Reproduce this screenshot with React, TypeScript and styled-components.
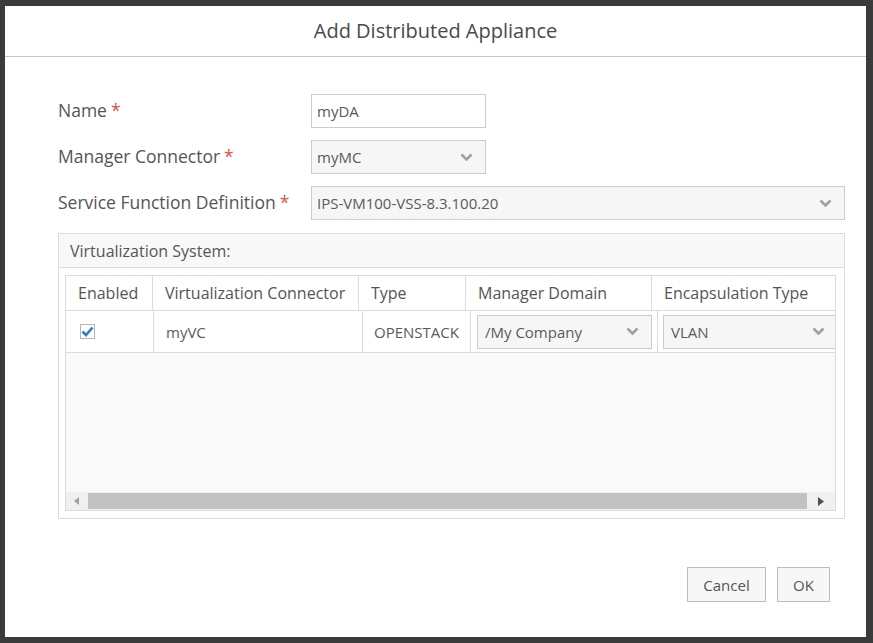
import React from "react";
import styled, { createGlobalStyle } from "styled-components";

const GlobalStyle = createGlobalStyle`
  html, body { margin: 0; padding: 0; }
  body {
    background: #3b3b3b;
    font-family: "Open Sans", "Liberation Sans", sans-serif;
    color: #444;
  }
  * { box-sizing: border-box; }
`;

const Backdrop = styled.div`
  width: 873px;
  height: 643px;
  padding: 6px 7px 6px 5px;
  background: #3b3b3b;
`;

const Dialog = styled.div`
  width: 100%;
  height: 100%;
  background: #fff;
  display: flex;
  flex-direction: column;
`;

const Header = styled.div`
  height: 51px;
  flex: none;
  border-bottom: 1px solid #c4c4c4;
  display: flex;
  align-items: center;
  justify-content: center;
  padding-bottom: 1px;
  font-size: 20px;
  color: #4a4a4a;
`;

const Body = styled.div`
  flex: 1;
  padding: 37px 21px 0 53px;
  display: flex;
  flex-direction: column;
`;

const FormRow = styled.div`
  display: grid;
  grid-template-columns: 253px 1fr;
  align-items: center;
  margin-bottom: 12px;
`;

const Label = styled.label`
  font-size: 17.5px;
  color: #555;
  margin-top: -3px;
`;

const Req = styled.span`
  color: #d9534f;
  margin-left: 4px;
`;

const TextInput = styled.div<{ $w?: number }>`
  width: ${(p) => (p.$w ? `${p.$w}px` : "100%")};
  height: 34px;
  border: 1px solid #ccc;
  background: #fff;
  display: flex;
  align-items: center;
  padding: 0 5px;
  font-size: 15px;
  color: #5a5a5a;
`;

const SelectBox = styled.div<{ $w?: number; $pad: number }>`
  width: ${(p) => (p.$w ? `${p.$w}px` : "100%")};
  height: 34px;
  border: 1px solid #ccc;
  background: #f6f6f6;
  display: flex;
  align-items: center;
  justify-content: space-between;
  padding: 0 12px 0 ${(p) => p.$pad}px;
  font-size: 15px;
  color: #5a5a5a;
  flex: none;
`;

const Chevron = () => (
  <svg width="13" height="9" viewBox="0 0 13 9">
    <polyline points="1.5,1.5 6.5,6.5 11.5,1.5" fill="none" stroke="#a0a0a0" strokeWidth="2.6" />
  </svg>
);

const Select = ({ value, w, pad = 5 }: { value: string; w?: number; pad?: number }) => (
  <SelectBox $w={w} $pad={pad}>
    <span>{value}</span>
    <Chevron />
  </SelectBox>
);

const Panel = styled.div`
  margin-top: 1px;
  border: 1px solid #dcdcdc;
  height: 286px;
  display: flex;
  flex-direction: column;
`;

const PanelHeader = styled.div`
  height: 34px;
  flex: none;
  background: #f8f8f8;
  border-bottom: 1px solid #dcdcdc;
  display: flex;
  align-items: center;
  padding-left: 11px;
  font-size: 16px;
  color: #555;
`;

const PanelBody = styled.div`
  flex: 1;
  padding: 7px 8px 7px 6px;
  display: flex;
`;

const TableBox = styled.div`
  flex: 1;
  border: 1px solid #dcdcdc;
  background: #f9f9f9;
  display: flex;
  flex-direction: column;
  overflow: hidden;
`;

const HeadRow = styled.div`
  display: grid;
  grid-template-columns: 87px 206px 107px 186px 200px;
  height: 35px;
  flex: none;
  background: #fff;
  border-bottom: 1px solid #dcdcdc;
`;

const HeadCell = styled.div<{ $last?: boolean }>`
  display: flex;
  align-items: center;
  padding-left: 12px;
  font-size: 16px;
  color: #555;
  white-space: nowrap;
  border-right: ${(p) => (p.$last ? "none" : "1px solid #dcdcdc")};
`;

const DataRow = styled.div`
  display: grid;
  grid-template-columns: 88px 209px 108px 187px 200px;
  height: 42px;
  flex: none;
  background: #fff;
  border-bottom: 1px solid #dcdcdc;
`;

const Cell = styled.div<{ $pad?: number; $last?: boolean }>`
  display: flex;
  align-items: center;
  padding-left: ${(p) => p.$pad ?? 12}px;
  font-size: 15px;
  color: #5a5a5a;
  white-space: nowrap;
  border-right: ${(p) => (p.$last ? "none" : "1px solid #dcdcdc")};
`;

const Check = styled.div`
  width: 15px;
  height: 15px;
  border: 1px solid #b5b5b5;
  background: #fff;
  display: flex;
  align-items: center;
  justify-content: center;
`;

const Filler = styled.div`
  flex: 1;
`;

const Scrollbar = styled.div`
  height: 18px;
  flex: none;
  display: flex;
  background: #f0f0f0;
`;

const ScrollArrow = styled.div<{ $w: number }>`
  width: ${(p) => p.$w}px;
  flex: none;
  display: flex;
  align-items: center;
  justify-content: center;
`;

const Thumb = styled.div`
  flex: 1;
  background: #c1c1c1;
  margin: 1px 0;
`;

const Footer = styled.div`
  display: flex;
  justify-content: flex-end;
  gap: 11px;
  padding: 48px 15px 0 0;
`;

const Button = styled.button<{ $w: number }>`
  width: ${(p) => p.$w}px;
  height: 35px;
  border: 1px solid #bdbdbd;
  background: #f7f7f7;
  font-family: "Open Sans", "Liberation Sans", sans-serif;
  font-size: 15px;
  color: #555;
  padding: 0;
`;

export default function App() {
  return (
    <>
      <GlobalStyle />
      <Backdrop>
        <Dialog>
          <Header>Add Distributed Appliance</Header>
          <Body>
            <FormRow>
              <Label>
                Name<Req>*</Req>
              </Label>
              <TextInput $w={175}>myDA</TextInput>
            </FormRow>
            <FormRow>
              <Label>
                Manager Connector<Req>*</Req>
              </Label>
              <Select value="myMC" w={175} />
            </FormRow>
            <FormRow>
              <Label>
                Service Function Definition<Req>*</Req>
              </Label>
              <Select value="IPS-VM100-VSS-8.3.100.20" />
            </FormRow>
            <Panel>
              <PanelHeader>Virtualization System:</PanelHeader>
              <PanelBody>
                <TableBox>
                  <HeadRow>
                    <HeadCell>Enabled</HeadCell>
                    <HeadCell>Virtualization Connector</HeadCell>
                    <HeadCell>Type</HeadCell>
                    <HeadCell>Manager Domain</HeadCell>
                    <HeadCell $last>Encapsulation Type</HeadCell>
                  </HeadRow>
                  <DataRow>
                    <Cell $pad={14}>
                      <Check>
                        <svg width="13" height="11" viewBox="0 0 13 11">
                          <polyline
                            points="1.5,5.5 5,9 11.5,1.5"
                            fill="none"
                            stroke="#2f7bd0"
                            strokeWidth="2.6"
                          />
                        </svg>
                      </Check>
                    </Cell>
                    <Cell>myVC</Cell>
                    <Cell $pad={11}>OPENSTACK</Cell>
                    <Cell $pad={6}>
                      <Select value="/My Company" w={175} pad={7} />
                    </Cell>
                    <Cell $pad={5} $last>
                      <Select value="VLAN" w={175} pad={7} />
                    </Cell>
                  </DataRow>
                  <Filler />
                  <Scrollbar>
                    <ScrollArrow $w={22}>
                      <svg width="6" height="8" viewBox="0 0 6 8">
                        <polygon points="5,0 5,8 0,4" fill="#a0a0a0" />
                      </svg>
                    </ScrollArrow>
                    <Thumb />
                    <ScrollArrow $w={28}>
                      <svg width="6" height="9" viewBox="0 0 6 9">
                        <polygon points="0,0 0,9 6,4.5" fill="#505050" />
                      </svg>
                    </ScrollArrow>
                  </Scrollbar>
                </TableBox>
              </PanelBody>
            </Panel>
            <Footer>
              <Button $w={79}>Cancel</Button>
              <Button $w={53}>OK</Button>
            </Footer>
          </Body>
        </Dialog>
      </Backdrop>
    </>
  );
}
